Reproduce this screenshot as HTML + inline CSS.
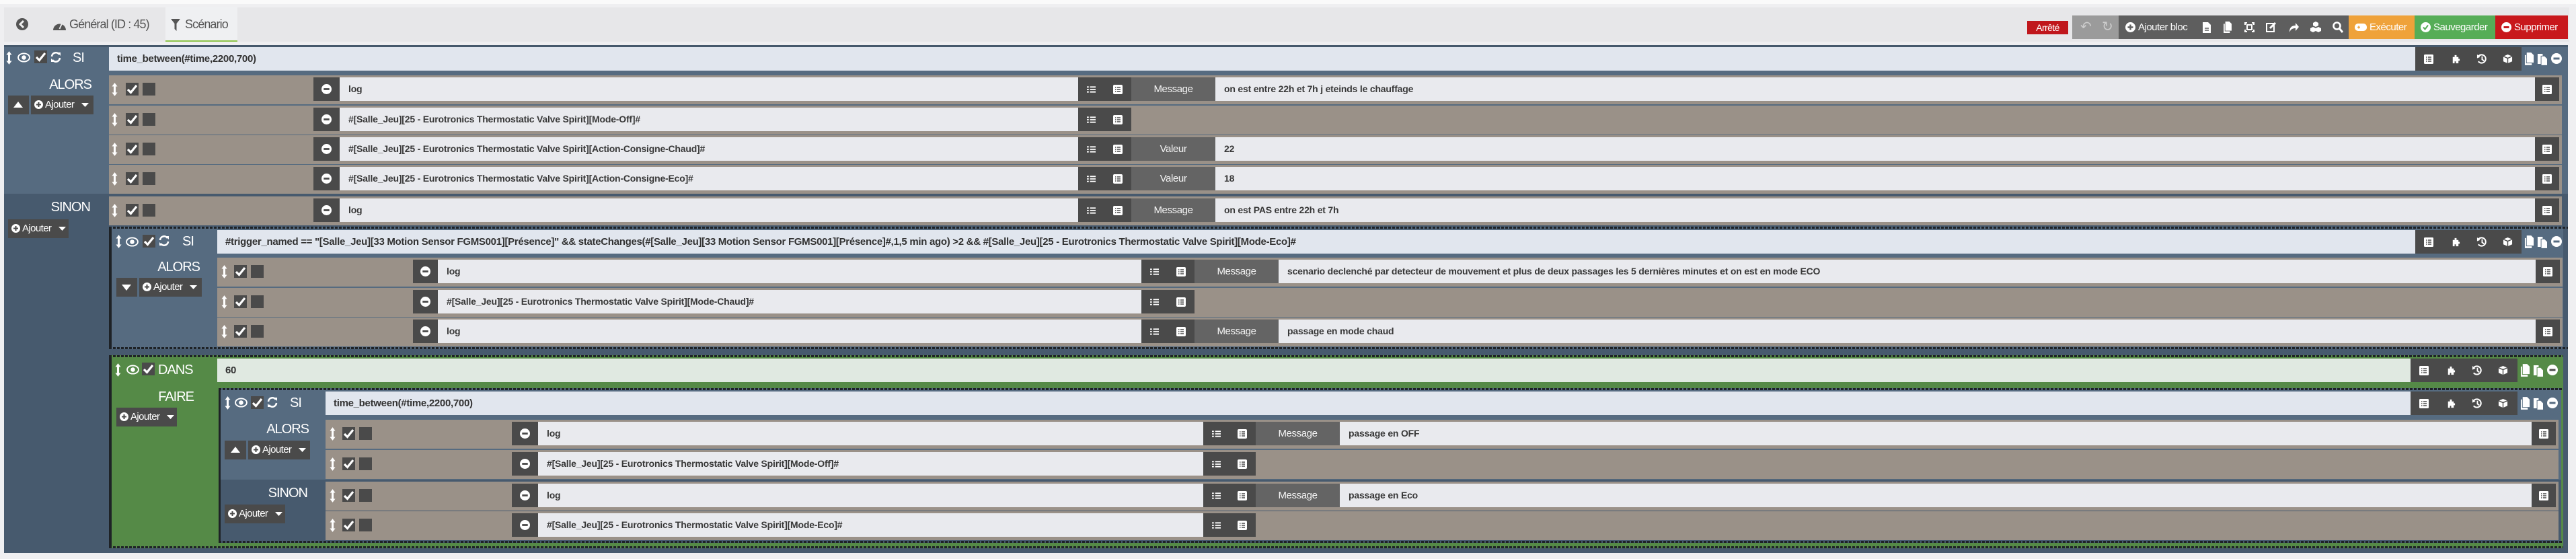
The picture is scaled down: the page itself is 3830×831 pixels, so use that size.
<!DOCTYPE html>
<html><head><meta charset="utf-8">
<style>
*{margin:0;padding:0;box-sizing:border-box}
body{width:3830px;height:831px;background:#efeff1;position:relative;overflow:hidden;font-family:"Liberation Sans",sans-serif}
.a{position:absolute}
.dk{position:absolute;background:#4a4a4a}
.row{position:absolute;background:#9a9188;height:43px}
.inp{position:absolute;top:3px;height:35px;background:#e9eaee;font-weight:bold;font-size:14px;color:#383838;line-height:35px;padding-left:13px;white-space:nowrap;overflow:hidden;letter-spacing:-.2px}
.lbl{position:absolute;top:3px;height:35px;background:#646464;color:#f4f4f4;text-align:center;font-size:15px;line-height:35px;letter-spacing:-.4px}
.cond{position:absolute;height:35px;background:#e1e6ee;font-weight:bold;font-size:15px;color:#333;line-height:35px;padding-left:12px;white-space:nowrap;overflow:hidden;letter-spacing:-.3px}
.sec{position:absolute;color:#fff;font-size:20px;letter-spacing:-1px;text-align:right;line-height:22px}
.btn{position:absolute;background:#4a4a4a;color:#fff;font-size:15px;letter-spacing:-.6px;line-height:28px;height:28px;white-space:nowrap}
.chk{position:absolute;width:19px;height:19px;background:#4a4a4a}
.dots{position:absolute;height:3px;background:repeating-linear-gradient(90deg,#1e2226 0 4px,transparent 4px 6px)}
.ibox{position:absolute;background:#4a4a4a;height:35px}
.tb{position:absolute;height:35px;top:23px;color:#fff;font-size:15px;line-height:35px;letter-spacing:-.5px;white-space:nowrap}
</style></head><body>
<svg width="0" height="0" style="position:absolute">
<defs>
<symbol id="mv" viewBox="0 0 10 22"><path d="M5 0 L9.5 6 H6.7 V16 H9.5 L5 22 L0.5 16 H3.3 V6 H0.5Z" fill="#fff"/></symbol>
<symbol id="ck" viewBox="0 0 19 19"><path d="M3 10 L7.5 14.5 L16 4" stroke="#fff" stroke-width="3.2" fill="none"/></symbol>
<symbol id="mn" viewBox="0 0 16 16"><circle cx="8" cy="8" r="8" fill="#fff"/><rect x="3.5" y="6.5" width="9" height="3" fill="#4a4a4a"/></symbol>
<symbol id="mnw" viewBox="0 0 16 16"><circle cx="8" cy="8" r="8" fill="#fff"/><rect x="3.5" y="6.5" width="9" height="3" fill="#566b80"/></symbol>
<symbol id="tk" viewBox="0 0 14 12"><path d="M0 2h3M0 6h3M0 10h3M5 2h9M5 6h9M5 10h9" stroke="#fff" stroke-width="2"/></symbol>
<symbol id="ls" viewBox="0 0 14 14"><rect width="14" height="14" rx="2" fill="#fff"/><path d="M3 4h1.5M6 4h5M3 7h1.5M6 7h5M3 10h1.5M6 10h5" stroke="#4a4a4a" stroke-width="1.6"/></symbol>
<symbol id="ey" viewBox="0 0 20 16"><ellipse cx="10" cy="8" rx="9" ry="6.5" fill="none" stroke="#fff" stroke-width="2"/><circle cx="10" cy="8" r="3.5" fill="#fff"/></symbol>
<symbol id="rf" viewBox="0 0 16 16"><path d="M2 7 A6 6 0 0 1 13 4 M14 9 A6 6 0 0 1 3 12" stroke="#fff" stroke-width="2.6" fill="none"/><path d="M10 1 L15 1 L15 6Z M6 15 L1 15 L1 10Z" fill="#fff"/></symbol>
<symbol id="pz" viewBox="0 0 16 16"><path d="M4 5 H7 V2 H10 V5 H13 V8 H15 V11 H13 V15 H9 V12 H7 V15 H4Z" fill="#fff"/></symbol>
<symbol id="hs" viewBox="0 0 16 16"><path d="M3 4 A6.5 6.5 0 1 1 3 12" stroke="#fff" stroke-width="2.2" fill="none"/><path d="M1 1 L6 5 L1 7Z" fill="#fff"/><path d="M9 4 V9 L12 11" stroke="#fff" stroke-width="2" fill="none"/></symbol>
<symbol id="cb" viewBox="0 0 16 16"><path d="M8 1 L15 4 V12 L8 15 L1 12 V4Z" fill="#fff"/><path d="M1 4 L8 7 L15 4 M8 7 V15" stroke="#4a4a4a" stroke-width="1.5" fill="none"/></symbol>
<symbol id="cp" viewBox="0 0 16 20"><path d="M4 0 H11 L15 4 V16 H4Z" fill="#fff"/><path d="M1 4 V20 H12 V17 H3 V4Z" fill="#fff"/></symbol>
<symbol id="ps" viewBox="0 0 16 20"><path d="M1 2 H9 V5 H6 V18 H1Z" fill="#fff"/><path d="M7 6 H12 L16 10 V20 H7Z" fill="#fff"/></symbol>
<symbol id="li" viewBox="0 0 14 14"><rect width="14" height="14" rx="1.5" fill="#fff"/><path d="M3 4h1.5M6 4h5M3 7h1.5M6 7h5M3 10h1.5M6 10h5" stroke="#4a4a4a" stroke-width="1.6"/></symbol>
</defs></svg>

<div class="a" style="left:0;top:0;width:3830px;height:6px;background:#fafafa"></div>
<div class="a" style="left:6px;top:11px;width:3814px;height:51px;background:#e7e7e9"></div>
<div class="a" style="left:246px;top:11px;width:107px;height:51px;background:#eff0f2;border-bottom:2px solid #8dc44a"></div>
<svg class="a" style="left:24px;top:27px" width="18" height="18" viewBox="0 0 18 18"><circle cx="9" cy="9" r="9" fill="#555"/><path d="M11 4 L6 9 L11 14" stroke="#eee" stroke-width="3" fill="none"/></svg>
<svg class="a" style="left:79px;top:30px" width="19" height="15" viewBox="0 0 19 15"><path d="M0 15 A9.5 9.5 0 0 1 19 15Z" fill="#555"/><path d="M9.5 13 L13 5" stroke="#e7e7e9" stroke-width="2"/></svg>
<div class="a" style="left:103px;top:25px;font-size:18px;color:#555;letter-spacing:-.9px;line-height:22px">Général (ID : 45)</div>
<svg class="a" style="left:254px;top:28px" width="14" height="18" viewBox="0 0 14 18"><path d="M0 0 H14 L8.5 7 V18 L5.5 15 V7Z" fill="#555"/></svg>
<div class="a" style="left:275px;top:25px;font-size:18px;color:#555;letter-spacing:-.9px;line-height:22px">Scénario</div>

<div class="a" style="left:3014px;top:31px;width:61px;height:20px;background:#c0171c;color:#fff;font-size:14px;line-height:20px;text-align:center;letter-spacing:-.6px">Arrêté</div>
<div class="tb" style="left:3081px;width:69px;background:#9b9b9b"><span style="position:absolute;left:12px;font-size:20px;color:#ccc">&#x21B6;</span><span style="position:absolute;left:44px;font-size:20px;color:#ccc">&#x21BB;</span></div>
<div class="tb" style="left:3150px;width:342px;background:#5e5e5e">
<svg class="a" style="left:10px;top:10px" width="15" height="15"><circle cx="7.5" cy="7.5" r="7.5" fill="#fff"/><path d="M7.5 3.5v8M3.5 7.5h8" stroke="#5e5e5e" stroke-width="2.4"/></svg>
<span style="position:absolute;left:29px">Ajouter bloc</span>
<svg class="a" style="left:125px;top:10px" width="12" height="16"><path d="M0 0H8L12 4V16H0Z" fill="#fff"/><path d="M3 9h6M3 12h6" stroke="#5e5e5e" stroke-width="1.5"/></svg>
<svg class="a" style="left:155px;top:9px" width="14" height="17"><use href="#cp"/></svg>
<svg class="a" style="left:187px;top:10px" width="15" height="15" viewBox="0 0 15 15"><path d="M0 0h4v2H2v2H0ZM15 0h-4v2h2v2h2ZM0 15h4v-2H2v-2H0ZM15 15h-4v-2h2v-2h2Z" fill="#fff"/><rect x="4" y="4" width="7" height="7" fill="none" stroke="#fff" stroke-width="2"/></svg>
<svg class="a" style="left:219px;top:9px" width="16" height="16" viewBox="0 0 16 16"><rect x="1" y="3" width="11" height="12" fill="none" stroke="#fff" stroke-width="2"/><path d="M6 10 L14 2" stroke="#fff" stroke-width="3"/></svg>
<svg class="a" style="left:253px;top:10px" width="15" height="15" viewBox="0 0 15 15"><path d="M1 15 C1 7 5 5 10 5 V1 L15 7 L10 13 V9 C6 9 3 10 1 15Z" fill="#fff"/></svg>
<svg class="a" style="left:285px;top:9px" width="16" height="16" viewBox="0 0 16 16"><path d="M8 0L12 2V6L8 8L4 6V2ZM4 8L8 10V14L4 16L0 14V10ZM12 8L16 10V14L12 16L8 14V10Z" fill="#fff"/></svg>
<svg class="a" style="left:318px;top:9px" width="16" height="17" viewBox="0 0 16 17"><circle cx="6.5" cy="6.5" r="5" fill="none" stroke="#fff" stroke-width="2.6"/><path d="M10 10 L15 16" stroke="#fff" stroke-width="3"/></svg>
</div>
<div class="tb" style="left:3492px;width:98px;background:#efa23a"><svg class="a" style="left:9px;top:12px" width="18" height="11"><rect width="18" height="11" rx="5" fill="#fff"/><path d="M4 5.5h4M6 3.5v4" stroke="#efa23a" stroke-width="1.5"/></svg><span style="position:absolute;left:31px">Exécuter</span></div>
<div class="tb" style="left:3590px;width:120px;background:#56ad57"><svg class="a" style="left:9px;top:10px" width="15" height="15"><circle cx="7.5" cy="7.5" r="7.5" fill="#fff"/><path d="M4 7.5l2.5 3 4.5-6" stroke="#56ad57" stroke-width="2" fill="none"/></svg><span style="position:absolute;left:28px">Sauvegarder</span></div>
<div class="tb" style="left:3710px;width:108px;background:#c8181c"><svg class="a" style="left:9px;top:10px" width="15" height="15"><circle cx="7.5" cy="7.5" r="7.5" fill="#fff"/><rect x="3.5" y="6" width="8" height="3" fill="#c8181c"/></svg><span style="position:absolute;left:28px">Supprimer</span></div>

<div class="a" style="left:6px;top:67px;width:3812px;height:755px;background:#566b80;border-top:3px solid #46596c"></div>
<div class="a" style="left:6px;top:288px;width:3812px;height:534px;background:#475a6e"></div>

<svg class="a" style="left:9px;top:76px" width="9" height="20"><use href="#mv"/></svg>
<svg class="a" style="left:26px;top:78px" width="19" height="15"><use href="#ey"/></svg>
<div class="chk" style="left:51px;top:75px"><svg width="19" height="19"><use href="#ck"/></svg></div>
<svg class="a" style="left:75px;top:77px" width="16" height="16"><use href="#rf"/></svg>
<div class="sec" style="left:108px;top:75px;text-align:left">SI</div>
<div class="cond" style="left:162px;top:70px;width:3429px">time_between(#time,2200,700)</div>
<div class="ibox" style="left:3591px;top:70px;width:158px">
<svg class="a" style="left:13px;top:11px" width="14" height="14"><use href="#li"/></svg>
<svg class="a" style="left:52px;top:10px" width="15" height="15"><use href="#pz"/></svg>
<svg class="a" style="left:91px;top:10px" width="15" height="15"><use href="#hs"/></svg>
<svg class="a" style="left:130px;top:10px" width="15" height="15"><use href="#cb"/></svg>
</div>
<svg class="a" style="left:3753px;top:78px" width="15" height="19"><use href="#cp"/></svg>
<svg class="a" style="left:3772px;top:78px" width="15" height="19"><use href="#ps"/></svg>
<svg class="a" style="left:3793px;top:79px" width="16" height="16"><use href="#mnw"/></svg>

<div class="sec" style="left:60px;top:115px;width:76px">ALORS</div>
<div class="btn" style="left:12px;top:142px;width:31px"><svg class="a" style="left:8px;top:9px" width="14" height="9"><path d="M0 9L7 0L14 9Z" fill="#fff"/></svg></div>
<div class="btn" style="left:46px;top:142px;width:93px"><svg class="a" style="left:5px;top:7px" width="13" height="13"><circle cx="6.5" cy="6.5" r="6.5" fill="#fff"/><path d="M6.5 3v7M3 6.5h7" stroke="#4a4a4a" stroke-width="2"/></svg><span style="position:absolute;left:21px">Ajouter</span><svg class="a" style="left:75px;top:11px" width="11" height="6"><path d="M0 0H11L5.5 6Z" fill="#fff"/></svg></div>

<div class="row" style="left:162px;top:112px;width:3647px">
<svg class="a" style="left:4px;top:11px" width="9" height="20"><use href="#mv"/></svg>
<div class="chk" style="left:25px;top:11px"><svg width="19" height="19"><use href="#ck"/></svg></div>
<div class="chk" style="left:50px;top:11px"></div>
<div class="dk" style="left:304px;top:3px;width:39px;height:35px"><svg class="a" style="left:12px;top:10px" width="15" height="15"><use href="#mn"/></svg></div>
<div class="inp" style="left:343px;width:1098px">log</div>
<div class="dk" style="left:1441px;top:3px;width:79px;height:35px"><svg class="a" style="left:13px;top:12px" width="13" height="12"><use href="#tk"/></svg><svg class="a" style="left:52px;top:11px" width="14" height="14"><use href="#ls"/></svg></div>
<div class="lbl" style="left:1520px;width:125px">Message</div>
<div class="inp" style="left:1645px;width:1962px">on est entre 22h et 7h j eteinds le chauffage</div>
<div class="dk" style="left:3607px;top:3px;width:36px;height:35px"><svg class="a" style="left:11px;top:11px" width="14" height="14"><use href="#li"/></svg></div>
</div>
<div class="row" style="left:162px;top:157px;width:3647px">
<svg class="a" style="left:4px;top:11px" width="9" height="20"><use href="#mv"/></svg>
<div class="chk" style="left:25px;top:11px"><svg width="19" height="19"><use href="#ck"/></svg></div>
<div class="chk" style="left:50px;top:11px"></div>
<div class="dk" style="left:304px;top:3px;width:39px;height:35px"><svg class="a" style="left:12px;top:10px" width="15" height="15"><use href="#mn"/></svg></div>
<div class="inp" style="left:343px;width:1098px">#[Salle_Jeu][25 - Eurotronics Thermostatic Valve Spirit][Mode-Off]#</div>
<div class="dk" style="left:1441px;top:3px;width:79px;height:35px"><svg class="a" style="left:13px;top:12px" width="13" height="12"><use href="#tk"/></svg><svg class="a" style="left:52px;top:11px" width="14" height="14"><use href="#ls"/></svg></div>
</div>
<div class="row" style="left:162px;top:201px;width:3647px">
<svg class="a" style="left:4px;top:11px" width="9" height="20"><use href="#mv"/></svg>
<div class="chk" style="left:25px;top:11px"><svg width="19" height="19"><use href="#ck"/></svg></div>
<div class="chk" style="left:50px;top:11px"></div>
<div class="dk" style="left:304px;top:3px;width:39px;height:35px"><svg class="a" style="left:12px;top:10px" width="15" height="15"><use href="#mn"/></svg></div>
<div class="inp" style="left:343px;width:1098px">#[Salle_Jeu][25 - Eurotronics Thermostatic Valve Spirit][Action-Consigne-Chaud]#</div>
<div class="dk" style="left:1441px;top:3px;width:79px;height:35px"><svg class="a" style="left:13px;top:12px" width="13" height="12"><use href="#tk"/></svg><svg class="a" style="left:52px;top:11px" width="14" height="14"><use href="#ls"/></svg></div>
<div class="lbl" style="left:1520px;width:125px">Valeur</div>
<div class="inp" style="left:1645px;width:1962px">22</div>
<div class="dk" style="left:3607px;top:3px;width:36px;height:35px"><svg class="a" style="left:11px;top:11px" width="14" height="14"><use href="#li"/></svg></div>
</div>
<div class="row" style="left:162px;top:245px;width:3647px">
<svg class="a" style="left:4px;top:11px" width="9" height="20"><use href="#mv"/></svg>
<div class="chk" style="left:25px;top:11px"><svg width="19" height="19"><use href="#ck"/></svg></div>
<div class="chk" style="left:50px;top:11px"></div>
<div class="dk" style="left:304px;top:3px;width:39px;height:35px"><svg class="a" style="left:12px;top:10px" width="15" height="15"><use href="#mn"/></svg></div>
<div class="inp" style="left:343px;width:1098px">#[Salle_Jeu][25 - Eurotronics Thermostatic Valve Spirit][Action-Consigne-Eco]#</div>
<div class="dk" style="left:1441px;top:3px;width:79px;height:35px"><svg class="a" style="left:13px;top:12px" width="13" height="12"><use href="#tk"/></svg><svg class="a" style="left:52px;top:11px" width="14" height="14"><use href="#ls"/></svg></div>
<div class="lbl" style="left:1520px;width:125px">Valeur</div>
<div class="inp" style="left:1645px;width:1962px">18</div>
<div class="dk" style="left:3607px;top:3px;width:36px;height:35px"><svg class="a" style="left:11px;top:11px" width="14" height="14"><use href="#li"/></svg></div>
</div>

<div class="sec" style="left:50px;top:297px;width:84px">SINON</div>
<div class="btn" style="left:12px;top:326px;width:90px"><svg class="a" style="left:5px;top:7px" width="13" height="13"><circle cx="6.5" cy="6.5" r="6.5" fill="#fff"/><path d="M6.5 3v7M3 6.5h7" stroke="#4a4a4a" stroke-width="2"/></svg><span style="position:absolute;left:21px">Ajouter</span><svg class="a" style="left:75px;top:11px" width="11" height="6"><path d="M0 0H11L5.5 6Z" fill="#fff"/></svg></div>
<div class="row" style="left:162px;top:292px;width:3647px">
<svg class="a" style="left:4px;top:11px" width="9" height="20"><use href="#mv"/></svg>
<div class="chk" style="left:25px;top:11px"><svg width="19" height="19"><use href="#ck"/></svg></div>
<div class="chk" style="left:50px;top:11px"></div>
<div class="dk" style="left:304px;top:3px;width:39px;height:35px"><svg class="a" style="left:12px;top:10px" width="15" height="15"><use href="#mn"/></svg></div>
<div class="inp" style="left:343px;width:1098px">log</div>
<div class="dk" style="left:1441px;top:3px;width:79px;height:35px"><svg class="a" style="left:13px;top:12px" width="13" height="12"><use href="#tk"/></svg><svg class="a" style="left:52px;top:11px" width="14" height="14"><use href="#ls"/></svg></div>
<div class="lbl" style="left:1520px;width:125px">Message</div>
<div class="inp" style="left:1645px;width:1962px">on est PAS entre 22h et 7h</div>
<div class="dk" style="left:3607px;top:3px;width:36px;height:35px"><svg class="a" style="left:11px;top:11px" width="14" height="14"><use href="#li"/></svg></div>
</div>

<div class="a" style="left:162px;top:337px;width:3649px;height:182px;background:#566b80;border-left:4px solid #1e2226"></div>
<div class="dots" style="left:162px;top:337px;width:3656px"></div>
<div class="dots" style="left:162px;top:516px;width:3656px"></div>
<svg class="a" style="left:172px;top:349px" width="9" height="20"><use href="#mv"/></svg>
<svg class="a" style="left:187px;top:352px" width="19" height="15"><use href="#ey"/></svg>
<div class="chk" style="left:212px;top:349px"><svg width="19" height="19"><use href="#ck"/></svg></div>
<svg class="a" style="left:236px;top:350px" width="16" height="16"><use href="#rf"/></svg>
<div class="sec" style="left:271px;top:348px;text-align:left">SI</div>
<div class="cond" style="left:323px;top:342px;width:3268px">#trigger_named == "[Salle_Jeu][33 Motion Sensor FGMS001][Présence]" &amp;&amp; stateChanges(#[Salle_Jeu][33 Motion Sensor FGMS001][Présence]#,1,5 min ago) &gt;2 &amp;&amp; #[Salle_Jeu][25 - Eurotronics Thermostatic Valve Spirit][Mode-Eco]#</div>
<div class="ibox" style="left:3591px;top:342px;width:158px">
<svg class="a" style="left:13px;top:11px" width="14" height="14"><use href="#li"/></svg>
<svg class="a" style="left:52px;top:10px" width="15" height="15"><use href="#pz"/></svg>
<svg class="a" style="left:91px;top:10px" width="15" height="15"><use href="#hs"/></svg>
<svg class="a" style="left:130px;top:10px" width="15" height="15"><use href="#cb"/></svg>
</div>
<svg class="a" style="left:3753px;top:350px" width="15" height="19"><use href="#cp"/></svg>
<svg class="a" style="left:3772px;top:350px" width="15" height="19"><use href="#ps"/></svg>
<svg class="a" style="left:3793px;top:351px" width="16" height="16"><use href="#mnw"/></svg>
<div class="sec" style="left:220px;top:386px;width:77px">ALORS</div>
<div class="btn" style="left:173px;top:413px;width:31px"><svg class="a" style="left:8px;top:10px" width="14" height="9"><path d="M0 0L7 9L14 0Z" fill="#fff"/></svg></div>
<div class="btn" style="left:207px;top:413px;width:93px"><svg class="a" style="left:5px;top:7px" width="13" height="13"><circle cx="6.5" cy="6.5" r="6.5" fill="#fff"/><path d="M6.5 3v7M3 6.5h7" stroke="#4a4a4a" stroke-width="2"/></svg><span style="position:absolute;left:21px">Ajouter</span><svg class="a" style="left:75px;top:11px" width="11" height="6"><path d="M0 0H11L5.5 6Z" fill="#fff"/></svg></div>

<div class="row" style="left:323px;top:383px;width:3487px">
<svg class="a" style="left:6px;top:11px" width="9" height="20"><use href="#mv"/></svg>
<div class="chk" style="left:25px;top:11px"><svg width="19" height="19"><use href="#ck"/></svg></div>
<div class="chk" style="left:50px;top:11px"></div>
<div class="dk" style="left:291px;top:3px;width:37px;height:35px"><svg class="a" style="left:11px;top:10px" width="15" height="15"><use href="#mn"/></svg></div>
<div class="inp" style="left:328px;width:1046px">log</div>
<div class="dk" style="left:1374px;top:3px;width:79px;height:35px"><svg class="a" style="left:13px;top:12px" width="13" height="12"><use href="#tk"/></svg><svg class="a" style="left:52px;top:11px" width="14" height="14"><use href="#ls"/></svg></div>
<div class="lbl" style="left:1453px;width:125px">Message</div>
<div class="inp" style="left:1578px;width:1869px">scenario declenché par detecteur de mouvement et plus de deux passages les 5 dernières minutes et on est en mode ECO</div>
<div class="dk" style="left:3447px;top:3px;width:36px;height:35px"><svg class="a" style="left:11px;top:11px" width="14" height="14"><use href="#li"/></svg></div>
</div>
<div class="row" style="left:323px;top:428px;width:3487px">
<svg class="a" style="left:6px;top:11px" width="9" height="20"><use href="#mv"/></svg>
<div class="chk" style="left:25px;top:11px"><svg width="19" height="19"><use href="#ck"/></svg></div>
<div class="chk" style="left:50px;top:11px"></div>
<div class="dk" style="left:291px;top:3px;width:37px;height:35px"><svg class="a" style="left:11px;top:10px" width="15" height="15"><use href="#mn"/></svg></div>
<div class="inp" style="left:328px;width:1046px">#[Salle_Jeu][25 - Eurotronics Thermostatic Valve Spirit][Mode-Chaud]#</div>
<div class="dk" style="left:1374px;top:3px;width:79px;height:35px"><svg class="a" style="left:13px;top:12px" width="13" height="12"><use href="#tk"/></svg><svg class="a" style="left:52px;top:11px" width="14" height="14"><use href="#ls"/></svg></div>
</div>
<div class="row" style="left:323px;top:472px;width:3487px">
<svg class="a" style="left:6px;top:11px" width="9" height="20"><use href="#mv"/></svg>
<div class="chk" style="left:25px;top:11px"><svg width="19" height="19"><use href="#ck"/></svg></div>
<div class="chk" style="left:50px;top:11px"></div>
<div class="dk" style="left:291px;top:3px;width:37px;height:35px"><svg class="a" style="left:11px;top:10px" width="15" height="15"><use href="#mn"/></svg></div>
<div class="inp" style="left:328px;width:1046px">log</div>
<div class="dk" style="left:1374px;top:3px;width:79px;height:35px"><svg class="a" style="left:13px;top:12px" width="13" height="12"><use href="#tk"/></svg><svg class="a" style="left:52px;top:11px" width="14" height="14"><use href="#ls"/></svg></div>
<div class="lbl" style="left:1453px;width:125px">Message</div>
<div class="inp" style="left:1578px;width:1869px">passage en mode chaud</div>
<div class="dk" style="left:3447px;top:3px;width:36px;height:35px"><svg class="a" style="left:11px;top:11px" width="14" height="14"><use href="#li"/></svg></div>
</div>

<div class="a" style="left:162px;top:528px;width:3649px;height:287px;background:#558a47;border-left:4px solid #1e2226"></div>
<div class="dots" style="left:162px;top:528px;width:3649px"></div>
<div class="dots" style="left:162px;top:812px;width:3649px"></div>
<svg class="a" style="left:171px;top:540px" width="9" height="20"><use href="#mv"/></svg>
<svg class="a" style="left:188px;top:542px" width="19" height="15"><use href="#ey"/></svg>
<div class="chk" style="left:211px;top:539px"><svg width="19" height="19"><use href="#ck"/></svg></div>
<div class="sec" style="left:235px;top:539px;text-align:left">DANS</div>
<div class="cond" style="left:323px;top:533px;width:3261px;background:#e0e9e1">60</div>
<div class="ibox" style="left:3584px;top:533px;width:159px">
<svg class="a" style="left:13px;top:11px" width="14" height="14"><use href="#li"/></svg>
<svg class="a" style="left:52px;top:10px" width="15" height="15"><use href="#pz"/></svg>
<svg class="a" style="left:91px;top:10px" width="15" height="15"><use href="#hs"/></svg>
<svg class="a" style="left:130px;top:10px" width="15" height="15"><use href="#cb"/></svg>
</div>
<svg class="a" style="left:3747px;top:541px" width="15" height="19"><use href="#cp"/></svg>
<svg class="a" style="left:3766px;top:541px" width="15" height="19"><use href="#ps"/></svg>
<svg class="a" style="left:3787px;top:542px" width="16" height="16"><use href="#mn"/></svg>
<div class="sec" style="left:220px;top:579px;width:68px">FAIRE</div>
<div class="btn" style="left:173px;top:606px;width:90px"><svg class="a" style="left:5px;top:7px" width="13" height="13"><circle cx="6.5" cy="6.5" r="6.5" fill="#fff"/><path d="M6.5 3v7M3 6.5h7" stroke="#4a4a4a" stroke-width="2"/></svg><span style="position:absolute;left:21px">Ajouter</span><svg class="a" style="left:75px;top:11px" width="11" height="6"><path d="M0 0H11L5.5 6Z" fill="#fff"/></svg></div>

<div class="a" style="left:325px;top:577px;width:3483px;height:230px;background:#566b80;border-left:3px solid #1e2226"></div>
<div class="a" style="left:328px;top:713px;width:3480px;height:94px;background:#475a6e"></div>
<div class="dots" style="left:325px;top:577px;width:3486px"></div>
<div class="dots" style="left:325px;top:804px;width:3486px"></div>
<svg class="a" style="left:334px;top:589px" width="9" height="20"><use href="#mv"/></svg>
<svg class="a" style="left:349px;top:591px" width="19" height="15"><use href="#ey"/></svg>
<div class="chk" style="left:373px;top:589px"><svg width="19" height="19"><use href="#ck"/></svg></div>
<svg class="a" style="left:397px;top:590px" width="16" height="16"><use href="#rf"/></svg>
<div class="sec" style="left:431px;top:588px;text-align:left">SI</div>
<div class="cond" style="left:484px;top:582px;width:3100px">time_between(#time,2200,700)</div>
<div class="ibox" style="left:3584px;top:582px;width:159px">
<svg class="a" style="left:13px;top:11px" width="14" height="14"><use href="#li"/></svg>
<svg class="a" style="left:52px;top:10px" width="15" height="15"><use href="#pz"/></svg>
<svg class="a" style="left:91px;top:10px" width="15" height="15"><use href="#hs"/></svg>
<svg class="a" style="left:130px;top:10px" width="15" height="15"><use href="#cb"/></svg>
</div>
<svg class="a" style="left:3747px;top:590px" width="15" height="19"><use href="#cp"/></svg>
<svg class="a" style="left:3766px;top:590px" width="15" height="19"><use href="#ps"/></svg>
<svg class="a" style="left:3787px;top:591px" width="16" height="16"><use href="#mnw"/></svg>
<div class="sec" style="left:380px;top:627px;width:79px">ALORS</div>
<div class="btn" style="left:334px;top:655px;width:32px"><svg class="a" style="left:9px;top:9px" width="14" height="9"><path d="M0 9L7 0L14 9Z" fill="#fff"/></svg></div>
<div class="btn" style="left:369px;top:655px;width:92px"><svg class="a" style="left:5px;top:7px" width="13" height="13"><circle cx="6.5" cy="6.5" r="6.5" fill="#fff"/><path d="M6.5 3v7M3 6.5h7" stroke="#4a4a4a" stroke-width="2"/></svg><span style="position:absolute;left:21px">Ajouter</span><svg class="a" style="left:75px;top:11px" width="11" height="6"><path d="M0 0H11L5.5 6Z" fill="#fff"/></svg></div>
<div class="sec" style="left:380px;top:722px;width:77px">SINON</div>
<div class="btn" style="left:334px;top:750px;width:90px"><svg class="a" style="left:5px;top:7px" width="13" height="13"><circle cx="6.5" cy="6.5" r="6.5" fill="#fff"/><path d="M6.5 3v7M3 6.5h7" stroke="#4a4a4a" stroke-width="2"/></svg><span style="position:absolute;left:21px">Ajouter</span><svg class="a" style="left:75px;top:11px" width="11" height="6"><path d="M0 0H11L5.5 6Z" fill="#fff"/></svg></div>

<div class="row" style="left:484px;top:624px;width:3320px">
<svg class="a" style="left:6px;top:11px" width="9" height="20"><use href="#mv"/></svg>
<div class="chk" style="left:25px;top:11px"><svg width="19" height="19"><use href="#ck"/></svg></div>
<div class="chk" style="left:50px;top:11px"></div>
<div class="dk" style="left:277px;top:3px;width:39px;height:35px"><svg class="a" style="left:12px;top:10px" width="15" height="15"><use href="#mn"/></svg></div>
<div class="inp" style="left:316px;width:989px">log</div>
<div class="dk" style="left:1305px;top:3px;width:78px;height:35px"><svg class="a" style="left:13px;top:12px" width="13" height="12"><use href="#tk"/></svg><svg class="a" style="left:51px;top:11px" width="14" height="14"><use href="#ls"/></svg></div>
<div class="lbl" style="left:1383px;width:125px">Message</div>
<div class="inp" style="left:1508px;width:1772px">passage en OFF</div>
<div class="dk" style="left:3280px;top:3px;width:36px;height:35px"><svg class="a" style="left:11px;top:11px" width="14" height="14"><use href="#li"/></svg></div>
</div>
<div class="row" style="left:484px;top:669px;width:3320px">
<svg class="a" style="left:6px;top:11px" width="9" height="20"><use href="#mv"/></svg>
<div class="chk" style="left:25px;top:11px"><svg width="19" height="19"><use href="#ck"/></svg></div>
<div class="chk" style="left:50px;top:11px"></div>
<div class="dk" style="left:277px;top:3px;width:39px;height:35px"><svg class="a" style="left:12px;top:10px" width="15" height="15"><use href="#mn"/></svg></div>
<div class="inp" style="left:316px;width:989px">#[Salle_Jeu][25 - Eurotronics Thermostatic Valve Spirit][Mode-Off]#</div>
<div class="dk" style="left:1305px;top:3px;width:78px;height:35px"><svg class="a" style="left:13px;top:12px" width="13" height="12"><use href="#tk"/></svg><svg class="a" style="left:51px;top:11px" width="14" height="14"><use href="#ls"/></svg></div>
</div>
<div class="row" style="left:484px;top:716px;width:3320px">
<svg class="a" style="left:6px;top:11px" width="9" height="20"><use href="#mv"/></svg>
<div class="chk" style="left:25px;top:11px"><svg width="19" height="19"><use href="#ck"/></svg></div>
<div class="chk" style="left:50px;top:11px"></div>
<div class="dk" style="left:277px;top:3px;width:39px;height:35px"><svg class="a" style="left:12px;top:10px" width="15" height="15"><use href="#mn"/></svg></div>
<div class="inp" style="left:316px;width:989px">log</div>
<div class="dk" style="left:1305px;top:3px;width:78px;height:35px"><svg class="a" style="left:13px;top:12px" width="13" height="12"><use href="#tk"/></svg><svg class="a" style="left:51px;top:11px" width="14" height="14"><use href="#ls"/></svg></div>
<div class="lbl" style="left:1383px;width:125px">Message</div>
<div class="inp" style="left:1508px;width:1772px">passage en Eco</div>
<div class="dk" style="left:3280px;top:3px;width:36px;height:35px"><svg class="a" style="left:11px;top:11px" width="14" height="14"><use href="#li"/></svg></div>
</div>
<div class="row" style="left:484px;top:760px;width:3320px">
<svg class="a" style="left:6px;top:11px" width="9" height="20"><use href="#mv"/></svg>
<div class="chk" style="left:25px;top:11px"><svg width="19" height="19"><use href="#ck"/></svg></div>
<div class="chk" style="left:50px;top:11px"></div>
<div class="dk" style="left:277px;top:3px;width:39px;height:35px"><svg class="a" style="left:12px;top:10px" width="15" height="15"><use href="#mn"/></svg></div>
<div class="inp" style="left:316px;width:989px">#[Salle_Jeu][25 - Eurotronics Thermostatic Valve Spirit][Mode-Eco]#</div>
<div class="dk" style="left:1305px;top:3px;width:78px;height:35px"><svg class="a" style="left:13px;top:12px" width="13" height="12"><use href="#tk"/></svg><svg class="a" style="left:51px;top:11px" width="14" height="14"><use href="#ls"/></svg></div>
</div>
</body></html>
